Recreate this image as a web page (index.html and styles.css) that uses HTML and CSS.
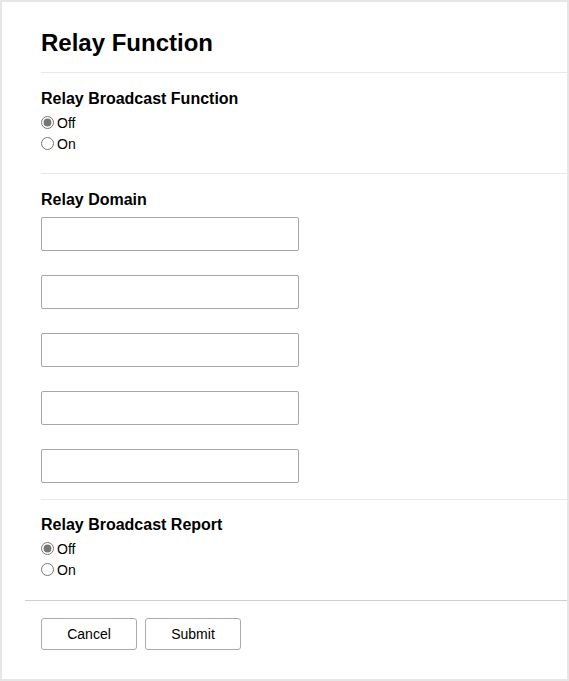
FILE: index.html
```html
<!DOCTYPE html>
<html>
<head>
<meta charset="utf-8">
<link rel="stylesheet" href="styles.css">
</head>
<body>
<div class="panel">
  <div class="content">
    <h1 class="title">Relay Function</h1>
    <section class="section">
      <h2 class="heading">Relay Broadcast Function</h2>
      <div class="radios">
        <label class="radio-row"><input type="radio" name="rbf" checked><span>Off</span></label>
        <label class="radio-row"><input type="radio" name="rbf"><span>On</span></label>
      </div>
    </section>
    <section class="section">
      <h2 class="heading heading-domain">Relay Domain</h2>
      <div class="inputs">
        <input class="text-input" type="text">
        <input class="text-input" type="text">
        <input class="text-input" type="text">
        <input class="text-input" type="text">
        <input class="text-input" type="text">
      </div>
    </section>
    <section class="section section-last">
      <h2 class="heading">Relay Broadcast Report</h2>
      <div class="radios">
        <label class="radio-row"><input type="radio" name="rbr" checked><span>Off</span></label>
        <label class="radio-row"><input type="radio" name="rbr"><span>On</span></label>
      </div>
    </section>
  </div>
  <div class="footer">
    <button class="btn" type="button">Cancel</button>
    <button class="btn" type="button">Submit</button>
  </div>
</div>
</body>
</html>
```

FILE: styles.css
```css
html, body {
  margin: 0;
  padding: 0;
}
body {
  background: #e6e6e6;
  padding: 2px;
  height: 681px;
  box-sizing: border-box;
  font-family: "Liberation Sans", Arial, sans-serif;
  color: #000;
}
.panel {
  background: #fff;
  height: 677px;
  box-sizing: border-box;
  padding-top: 27px;
}
.content {
  padding-left: 39px;
}
.title {
  margin: 0;
  font-size: 24px;
  line-height: 28px;
  font-weight: bold;
  padding-bottom: 15px;
  border-bottom: 1px solid #e8e8e8;
}
.section {
  padding: 16px 0 16px;
  border-bottom: 1px solid #e8e8e8;
}
.section-last {
  border-bottom: none;
  padding-top: 15px;
  padding-bottom: 17px;
}
.heading {
  margin: 0;
  font-size: 16px;
  line-height: 20px;
  font-weight: bold;
}
.heading-domain {
  margin-bottom: 7px;
}
.radios {
  display: flex;
  flex-direction: column;
  margin-top: 3px;
  margin-bottom: 3px;
}
.radio-row {
  display: flex;
  align-items: center;
  height: 21px;
  font-size: 14px;
}
.radio-row input {
  margin: 0 3px 0 0;
  width: 13px;
  height: 13px;
  accent-color: #767676;
}
.inputs {
  display: flex;
  flex-direction: column;
  gap: 24px;
}
.text-input {
  display: block;
  box-sizing: border-box;
  width: 258px;
  height: 34px;
  margin: 0;
  border: 1px solid #a6a6a6;
  border-radius: 2px;
  background: #fff;
}
.footer {
  margin-left: 23px;
  border-top: 1px solid #cfcfcf;
  padding: 17px 0 0 16px;
  display: flex;
  gap: 8px;
}
.btn {
  width: 96px;
  height: 32px;
  box-sizing: border-box;
  border: 1px solid #ababab;
  border-radius: 3px;
  background: #fff;
  font-family: "Liberation Sans", Arial, sans-serif;
  font-size: 14px;
  color: #000;
  padding: 0;
}
```
